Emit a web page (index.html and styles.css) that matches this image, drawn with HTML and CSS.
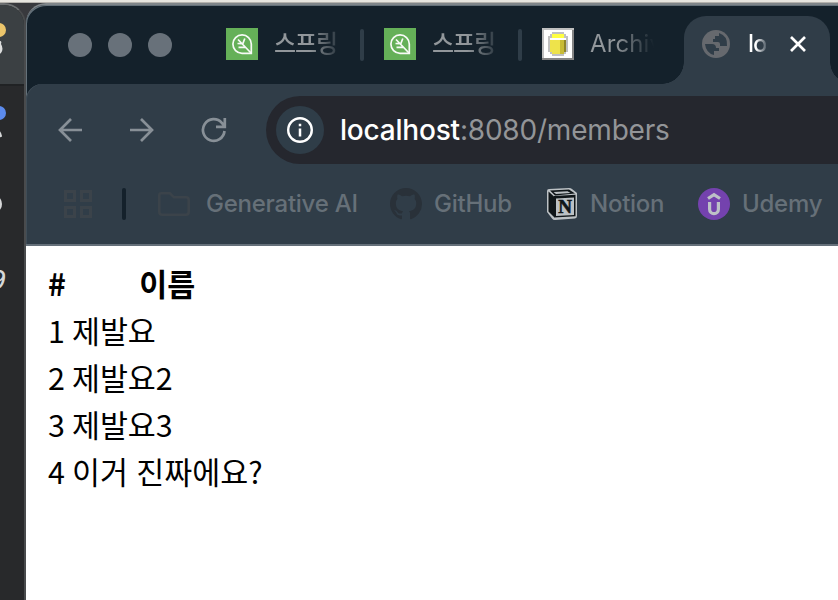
FILE: index.html
```html
<!DOCTYPE html>
<html lang="ko">
<head>
<meta charset="utf-8">
<title>localhost:8080/members</title>
<link rel="stylesheet" href="styles.css">
</head>
<body>
<aside class="behind">
  <div class="behind-head">
    <svg width="24" height="78" viewBox="0 6 24 78"><circle cx="-1" cy="31" r="7" fill="#ebc56b"/><path d="M0 42q2 0 1 3q3 5 0 9l-3 2" fill="#dcdddd"/></svg>
  </div>
  <div class="behind-body">
    <svg width="24" height="514" viewBox="0 86 24 514"><circle cx="-1" cy="113" r="7" fill="#5c8bed"/><path d="M-3 132q3-4 5 4q0 2-5 1" fill="#d6d7d8"/><ellipse cx="-3" cy="204" rx="4" ry="6" fill="none" stroke="#d6d7d8" stroke-width="2"/><text x="-10" y="289" class="count">9</text></svg>
  </div>
</aside>
<main class="window">
  <header class="tabs">
    <div class="lights"><i></i><i></i><i></i></div>
    <div class="tab">
      <svg class="fav" viewBox="0 0 32 32"><path fill="#65b058" d="M0 0h32v32H0z"/><g fill="none" stroke="#f7faf6" stroke-width="1.7"><path d="M25.3 25.3H16A9.2 9.2 0 1 1 25.3 16Z"/><path d="M12 11.5 25 25M11.5 15.5l4.3.2M16.8 15.700 18.800 10.500M12.5 19.3h6.7"/></g></svg>
      <span class="label">스프링</span>
    </div>
    <i class="sep"></i>
    <div class="tab">
      <svg class="fav" viewBox="0 0 32 32"><path fill="#65b058" d="M0 0h32v32H0z"/><g fill="none" stroke="#f7faf6" stroke-width="1.7"><path d="M25.3 25.3H16A9.2 9.2 0 1 1 25.3 16Z"/><path d="M12 11.5 25 25M11.5 15.5l4.3.2M16.8 15.700 18.800 10.500M12.5 19.3h6.7"/></g></svg>
      <span class="label">스프링</span>
    </div>
    <i class="sep"></i>
    <div class="tab">
      <svg class="fav" viewBox="0 0 32 32" shape-rendering="crispEdges"><path fill="#858585" d="M0 0h32v32H0z"/><path fill="#c0c0c0" d="M0 0h32v2H2v28H0z"/><path fill="#fff" d="M2 2h28v28H2z"/><path fill="#c0c0c0" d="M10 4h12v2h2v2h2v16h-2v2h-2v2H10v-2H8v-2H6V8h2V6h2z"/><path fill="#eee34b" d="M8 10h16v14h-2v2H10v-2H8z"/><path fill="#ffff42" d="M10 6h12v4H10z"/><path fill="#fff" d="M8 10h16v2H8z"/><path fill="#c8bb36" d="M18 12h4v14h-4z"/><path fill="#8f852b" d="M22 12h2v12h-2z"/></svg>
      <span class="label archive">Archiv</span>
    </div>
    <div class="tab active">
      <svg class="globe" viewBox="0 0 28 28"><circle cx="14" cy="14" r="14" fill="#66696e"/><path fill="#303d48" d="M3 14h7q4 0 4 4h3v3h-5v4Q4 23 3 14M17 3v3h-4v3h-2v3h5q2 0 2 2v2h7Q26 6 17 3"/></svg>
      <span class="label current">lo</span>
      <svg class="close" viewBox="0 0 18 18"><path d="m2 2 14 14M16 2 2 16" stroke="#fff" stroke-width="2.7"/></svg>
    </div>
  </header>
  <nav class="toolbar">
    <svg class="nav-icon" viewBox="0 0 26 26"><path d="M25 13H3M14 2 3 13l11 11"/></svg>
    <svg class="nav-icon" viewBox="0 0 26 26"><path d="M1 13h22M12 2l11 11-11 11"/></svg>
    <svg class="nav-icon" viewBox="0 0 26 26"><path d="M23.5 14a10.8 10.8 0 1 1-2.7-8.2L23.5 9M23.8 1v8.8H15"/></svg>
    <div class="address">
      <span class="info"><svg width="28" height="28" viewBox="0 0 28 28"><circle cx="14" cy="14" r="11.8" fill="none" stroke="#fff" stroke-width="2.4"/><path d="M14 12.6v7.8M14 7.7v2.6" stroke="#fff" stroke-width="2.5"/></svg></span>
      <span class="url"><b>localhost</b>:8080/members</span>
    </div>
  </nav>
  <nav class="bookmarks">
    <svg class="apps" viewBox="0 0 28 28"><path d="M1.5 1.5h9v9h-9zM17.5 1.5h9v9h-9zM1.5 17.5h9v9h-9zM17.5 17.5h9v9h-9z" fill="none" stroke="#3b434a" stroke-width="3"/></svg>
    <i class="divider"></i>
    <a class="mark folder"><svg viewBox="0 0 32 32"><path d="M3 5.3h9l4 4h12q2.7 0 2.7 2.7v12q0 2.7-2.7 2.7H4Q1.3 26.700 1.300 24V7q0-1.700 1.700-1.700Z" fill="none" stroke="#3b434a" stroke-width="2.600"/></svg><span>Generative AI</span></a>
    <a class="mark github"><svg viewBox="0 0 16 16"><path fill="#293139" d="M8 0C3.580 0 0 3.580 0 8c0 3.540 2.290 6.530 5.470 7.590.4.070.55-.17.55-.38 0-.19-.01-.82-.01-1.490-2.010.37-2.530-.49-2.690-.94-.09-.23-.48-.94-.82-1.130-.28-.15-.68-.52-.01-.53.63-.01 1.080.58 1.230.82.72 1.210 1.870.87 2.330.66.070-.52.28-.87.51-1.070-1.780-.2-3.640-.89-3.640-3.950 0-.87.31-1.590.82-2.150-.08-.2-.36-1.020.08-2.120 0 0 .67-.21 2.200.82.64-.18 1.320-.27 2-.27s1.360.09 2 .27c1.530-1.040 2.200-.82 2.200-.82.44 1.100.16 1.920.08 2.120.51.56.82 1.270.82 2.150 0 3.070-1.870 3.750-3.650 3.950.29.25.54.73.54 1.480 0 1.070-.01 1.930-.01 2.200 0 .21.15.46.55.38A8.010 8.010 0 0 0 16 8c0-4.420-3.580-8-8-8Z"/></svg><span>GitHub</span></a>
    <a class="mark notion"><svg viewBox="0 0 32 32"><path fill="#bcc1c4" d="M3 1 23 0q2 0 3 1l5 4v23q0 2-2 2.500L9 32q-2 0-3-1.500L1 24V3q0-2 2-2Z"/><path fill="#101619" d="M2.500 3.500 8 8.500v20.500L2.500 23.500ZM4 2.500 23 1.600 29 5.500 9 7.500ZM8 8 29.500 6.800v21.500L8 29.500Z"/><path fill="#bcc1c4" d="m10 10.500 18-1v17.500l-18 1Z"/><path fill="#bcc1c4" d="m7.500 4 14-.8 3 1.700-14.500 1Z"/><text x="19" y="25.300" class="notion-n">N</text></svg><span>Notion</span></a>
    <a class="mark udemy"><svg viewBox="0 0 32 32"><circle cx="16" cy="16" r="16" fill="#7442ae"/><path d="M10 10.500 16 6.700l6 3.800M11.600 14v7.200a4.400 4.400 0 0 0 8.800 0V14" fill="none" stroke="#bdc1c7" stroke-width="3.200"/></svg><span>Udemy</span></a>
  </nav>
  <section class="page">
    <table>
      <thead><tr><th>#</th><th>이름</th></tr></thead>
      <tbody>
        <tr><td>1</td><td>제발요</td></tr>
        <tr><td>2</td><td>제발요2</td></tr>
        <tr><td>3</td><td>제발요3</td></tr>
        <tr><td>4</td><td>이거 진짜에요?</td></tr>
      </tbody>
    </table>
  </section>
</main>
</body>
</html>
```
FILE: styles.css
```css
* { box-sizing: border-box; }
body {
  margin: 0;
  width: 838px;
  height: 600px;
  padding-top: 3px;
  overflow: hidden;
  display: grid;
  grid-template-columns: 26px 812px;
  background: linear-gradient(#e7e5df 0 2px, #b5b2ad 2px 3px, #38393d 3px);
  font-family: Inter, "Noto Sans CJK KR", sans-serif;
}
svg { display: block; flex: none; }
.behind {
  height: 597px;
  border-right: 2px solid #494b4d;
  border-top: 2px solid #6c6f71;
  border-radius: 0 22px 0 0;
  overflow: hidden;
  background: #28292b;
}
.behind-head { height: 81px; background: #3b4043; border-bottom: 2px solid #202224; }
.count { font: italic 500 25px Inter, sans-serif; fill: #d6d7d8; }
.window {
  height: 597px;
  display: flex;
  flex-direction: column;
  border-radius: 20px 0 0 0;
  border-top: 2px solid #7f8589;
  overflow: hidden;
  background: #14212b;
  box-shadow: inset 1px 1px #64717a;
}
.tabs { height: 79px; flex: none; display: flex; align-items: center; padding-left: 42px; }
.lights { display: flex; gap: 16px; width: 158px; flex: none; }
.lights i { width: 24px; height: 24px; border-radius: 50%; background: #68717a; }
.tab { display: flex; align-items: center; flex: none; width: 134px; margin-top: -1px; }
.fav { width: 32px; height: 32px; }
.label {
  margin-left: 16px;
  width: 64px;
  overflow: hidden;
  white-space: nowrap;
  font-size: 24px;
  font-weight: 500;
  line-height: 34px;
  letter-spacing: -1.1px;
  color: transparent;
  background: linear-gradient(90deg, #92979b 55%, #2c3841);
  background-clip: text;
}
.archive { letter-spacing: .1px; font-weight: 400; background: linear-gradient(90deg, #92979b 40%, #14212b); background-clip: text; }
.sep { width: 4px; height: 32px; flex: none; margin-right: 20px; border-radius: 2px; background: #2f3d48; }
.tabs .tab:nth-of-type(4) { width: 142px; }
.tabs .active {
  position: relative;
  align-self: flex-end;
  width: 146px;
  height: 68px;
  margin-top: 0;
  padding: 0 0 12px 18px;
  border-radius: 22px 22px 0 0;
  background: #303d48;
}
.active::before, .active::after {
  content: "";
  position: absolute;
  bottom: 0;
  width: 22px;
  height: 22px;
}
.active::before { left: -22px; background: radial-gradient(circle at 0 0, transparent 21.5px, #303d48 22px); }
.active::after { right: -22px; background: radial-gradient(circle at 100% 0, transparent 21.5px, #303d48 22px); }
.globe { width: 28px; height: 28px; }
.current {
  width: 18px;
  margin-left: 18px;
  background: linear-gradient(90deg, #fff 45%, #54606a);
  background-clip: text;
}
.close { width: 18px; height: 18px; margin-left: 23px; }
.toolbar {
  height: 92px;
  flex: none;
  display: flex;
  align-items: center;
  padding-left: 31px;
  border-radius: 16px 0 0 0;
  background: #303d48;
  box-shadow: inset 1px 0 #404d57;
}
.nav-icon { width: 26px; height: 26px; margin-right: 46px; fill: none; stroke: #889097; stroke-width: 2.7; }
.address {
  flex: 1;
  height: 68px;
  margin-left: -7px;
  display: flex;
  align-items: center;
  padding-left: 10px;
  border-radius: 34px 0 0 34px;
  background: #25272e;
}
.info { width: 48px; height: 48px; display: grid; place-items: center; border-radius: 50%; background: #2f3d48; }
.url { margin-left: 16px; font-size: 28px; letter-spacing: -.2px; white-space: nowrap; color: #939598; }
.url b { font-weight: 500; color: #fff; }
.bookmarks {
  height: 70px;
  flex: none;
  display: flex;
  align-items: flex-start;
  padding: 12px 0 0 38px;
  background: #303d48;
  border-bottom: 2px solid #65707a;
  box-shadow: inset 1px 0 #404d57;
}
.apps { width: 28px; height: 28px; margin-top: 2px; }
.divider { width: 4px; height: 32px; margin: 0 32px 0 30px; border-radius: 2px; background: #14212b; }
.mark { display: flex; align-items: center; height: 32px; flex: none; font-size: 24px; font-weight: 500; letter-spacing: -.25px; color: #667078; white-space: nowrap; }
.mark span { margin-top: -1px; }
.mark svg { width: 32px; height: 32px; }
.folder { width: 232px; gap: 16px; }
.github { width: 156px; gap: 12px; }
.notion { width: 152px; gap: 12px; }
.udemy { gap: 12px; }
.notion-n { font: bold 19px "Liberation Serif", serif; letter-spacing: 0; text-anchor: middle; fill: #101619; stroke: #101619; stroke-width: .6px; }
.page { flex: 1; background: #fff; padding: 12px 0 0 17px; }
table { border-spacing: 4px; font-family: "Noto Sans CJK KR", sans-serif; font-size: 30.4px; line-height: 41px; color: #000; }
th, td { padding: 1px; white-space: nowrap; }
```
